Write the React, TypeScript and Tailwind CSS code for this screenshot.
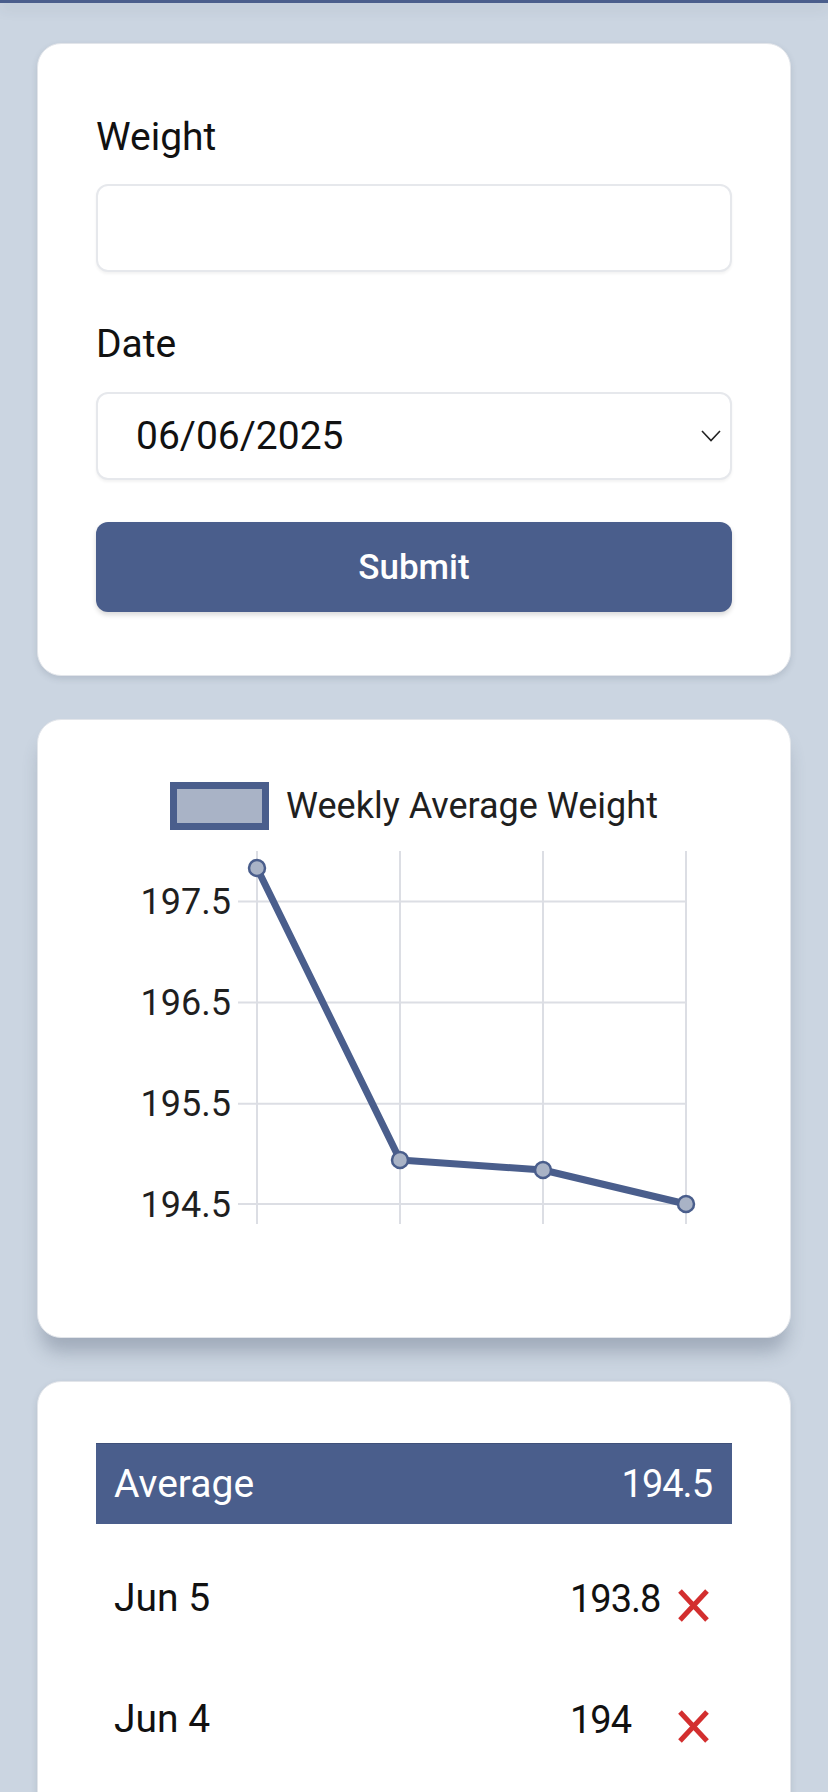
import React from "react";

const BLUE = "#4a5e8c";

function Chevron() {
  return (
    <svg width="20" height="12" viewBox="0 0 20 12" fill="none">
      <path d="M1 1 L10 10.5 L19 1" stroke="#222" strokeWidth="1.6" />
    </svg>
  );
}

function XIcon() {
  return (
    <svg width="31" height="33" viewBox="0 0 31 33" fill="none">
      <path d="M2 2 L29 31 M29 2 L2 31" stroke="#d32f2f" strokeWidth="5" />
    </svg>
  );
}

function Chart() {
  const xs = [219, 362, 505, 648];
  const ys = [182.4, 283.6, 384.8, 485];
  const labels = ["197.5", "196.5", "195.5", "194.5"];
  const pts: [number, number][] = [
    [219, 149],
    [362, 441],
    [505, 451],
    [648, 485],
  ];
  return (
    <svg width="754" height="508" viewBox="0 111 754 508" className="block">
      {xs.map((x) => (
        <line key={x} x1={x} y1={132} x2={x} y2={505} stroke="#dcdee4" strokeWidth="2" />
      ))}
      {ys.map((y) => (
        <line key={y} x1={200} y1={y} x2={648} y2={y} stroke="#dcdee4" strokeWidth="2" />
      ))}
      {ys.map((y, i) => (
        <text
          key={labels[i]}
          x={193}
          y={y + 12.5}
          textAnchor="end"
          fontFamily="Roboto, sans-serif"
          fontSize="36"
          fill="#1f1f1f"
        >
          {labels[i]}
        </text>
      ))}
      <polyline
        points={pts.map((p) => p.join(",")).join(" ")}
        fill="none"
        stroke={BLUE}
        strokeWidth="7"
        strokeLinejoin="round"
      />
      {pts.map(([x, y]) => (
        <circle key={x} cx={x} cy={y} r="8" fill="#a9b3c6" stroke={BLUE} strokeWidth="2.5" />
      ))}
    </svg>
  );
}

export default function App() {
  return (
    <div className="min-h-screen bg-[#cbd5e1] font-['Roboto',sans-serif] text-[#111]">
      <div className="relative z-10 h-[3px] bg-[#4a5e8c] shadow-[0_4px_14px_rgba(51,65,85,0.22)]" />
      <div className="flex flex-col gap-[43px] px-[37px] pt-[40px]">
        {/* Form card */}
        <div className="rounded-[24px] border border-[#e2e5ea] bg-white px-[58px] pt-[74px] pb-[63px] shadow-[0_3px_6px_rgba(51,65,85,0.15)]">
          <div className="text-[39px] leading-none">Weight</div>
          <input
            className="mt-[27px] block h-[88px] w-full rounded-[12px] border-2 border-[#e6e8ec] bg-white shadow-[0_2px_3px_rgba(0,0,0,0.05)] outline-none"
            type="text"
          />
          <div className="mt-[53px] text-[39px] leading-none">Date</div>
          <div className="mt-[28px] flex h-[88px] w-full items-center justify-between rounded-[12px] border-2 border-[#e6e8ec] bg-white pl-[38px] pr-[9px] shadow-[0_2px_3px_rgba(0,0,0,0.05)]">
            <span className="text-[39px] leading-none">06/06/2025</span>
            <Chevron />
          </div>
          <button className="mt-[42px] flex h-[90px] w-full items-center justify-center rounded-[12px] bg-[#4a5e8c] text-[35px] font-medium leading-none text-white shadow-[0_3px_5px_rgba(0,0,0,0.15)]">
            Submit
          </button>
        </div>

        {/* Chart card */}
        <div className="h-[619px] rounded-[24px] border border-[#e2e5ea] bg-white pt-[62px] shadow-[0_18px_18px_-4px_rgba(71,85,105,0.32)]">
          <div className="flex h-[48px] items-center justify-center gap-[17px]">
            <div className="h-[48px] w-[99px] border-[7px] border-[#4a5e8c] bg-[#a9b3c6]" />
            <span className="text-[36px] leading-none text-[#1f1f1f]">Weekly Average Weight</span>
          </div>
          <Chart />
        </div>

        {/* Table card */}
        <div className="h-[480px] rounded-t-[24px] border border-[#e2e5ea] bg-white px-[58px] pt-[61px] shadow-[0_3px_6px_rgba(51,65,85,0.15)]">
          <div className="flex h-[81px] items-center justify-between border-t border-[#3f5079] bg-[#4a5e8c] pl-[18px] pr-[20px] text-[39px] leading-none text-white">
            <span>Average</span>
            <span className="text-[38px] tracking-[-1px]">194.5</span>
          </div>
          <div className="mt-[14px] flex h-[121px] items-center text-[39px] leading-none">
            <span className="w-[474px] pl-[18px]">Jun 5</span>
            <span className="w-[108px] text-[38px] tracking-[-1px]">193.8</span>
            <span className="mt-[13px]">
              <XIcon />
            </span>
          </div>
          <div className="flex h-[121px] items-center text-[39px] leading-none">
            <span className="w-[474px] pl-[18px]">Jun 4</span>
            <span className="w-[108px] text-[38px] tracking-[-1px]">194</span>
            <span className="mt-[13px]">
              <XIcon />
            </span>
          </div>
        </div>
      </div>
    </div>
  );
}
